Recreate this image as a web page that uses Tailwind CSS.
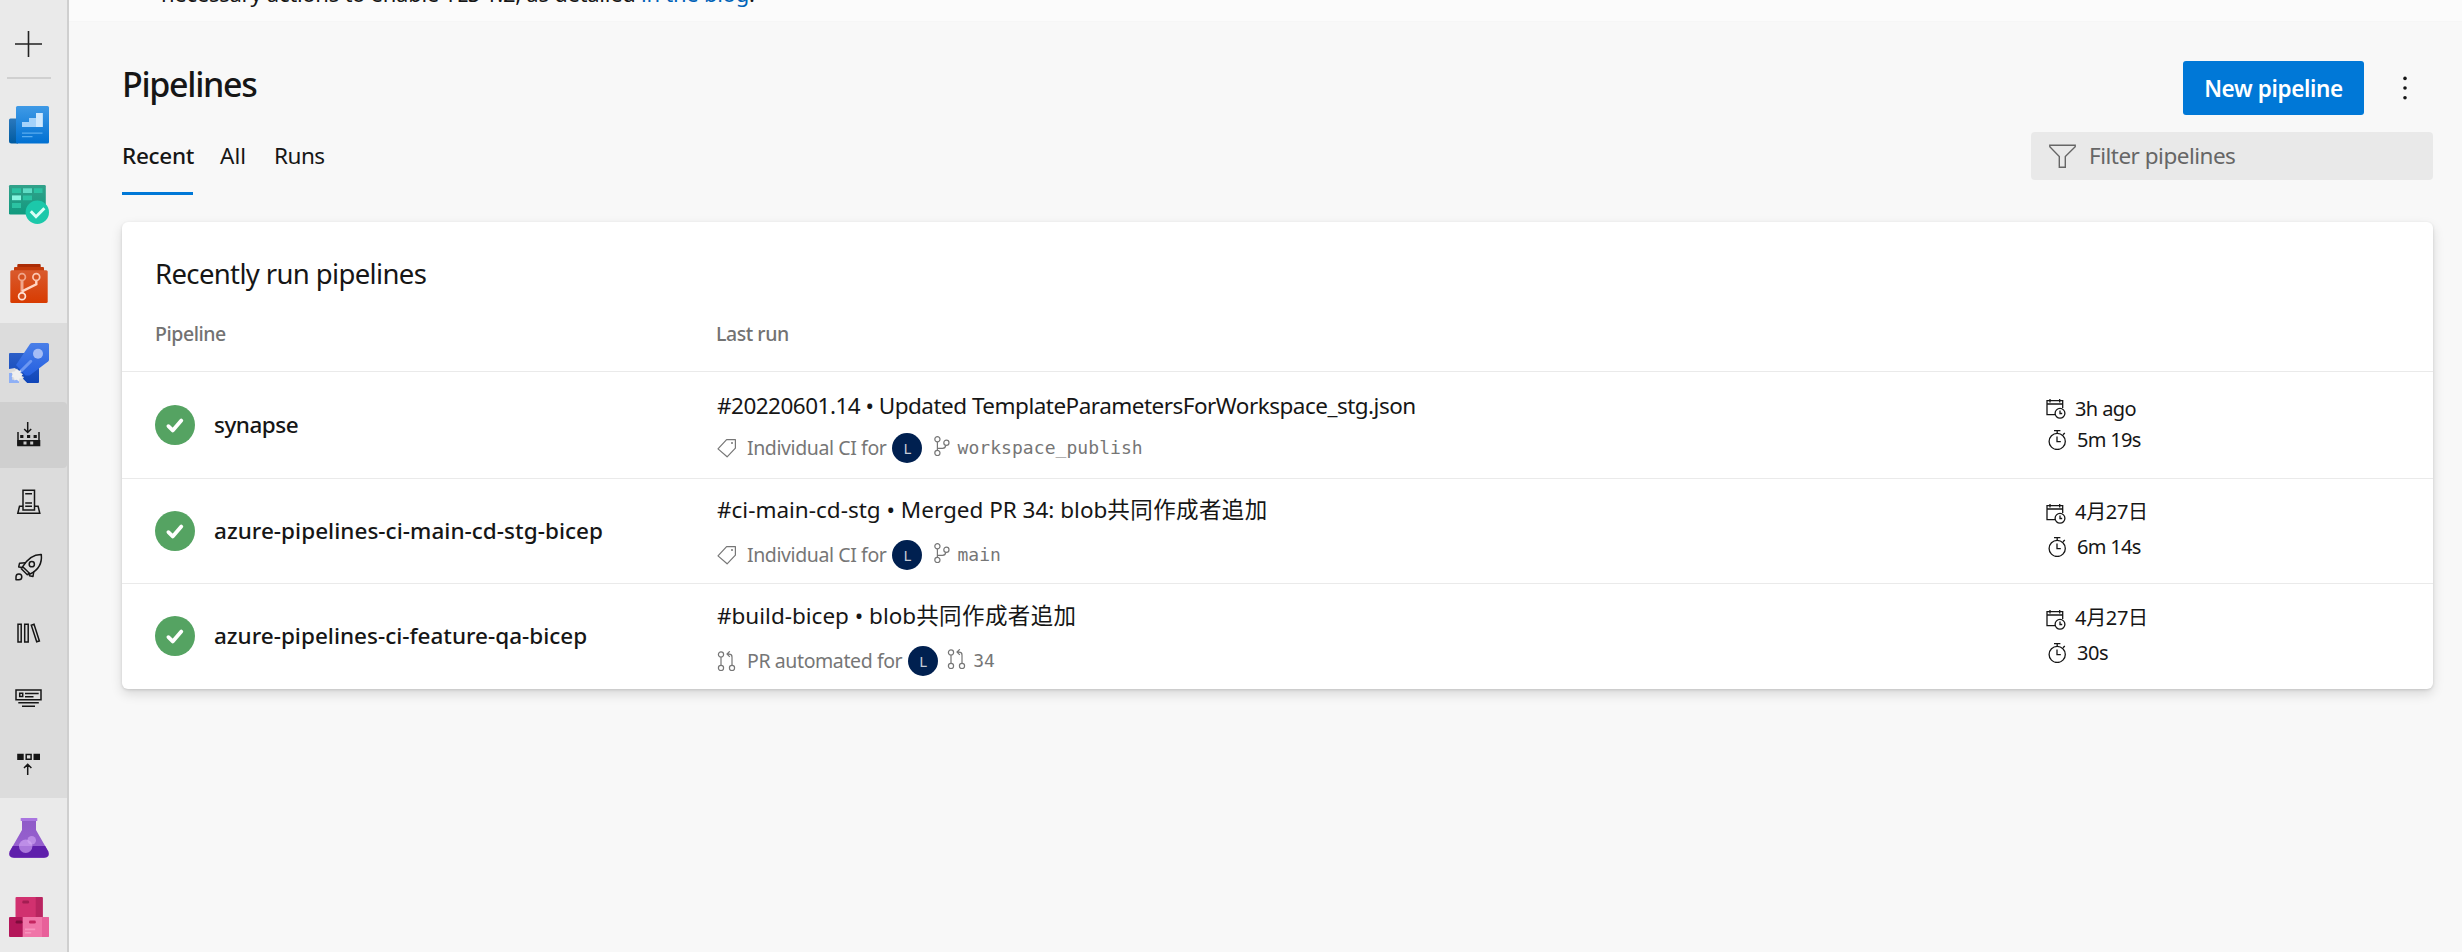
<!DOCTYPE html>
<html lang="en">
<head>
<meta charset="utf-8">
<title>Pipelines</title>
<script src="https://cdn.jsdelivr.net/npm/@tailwindcss/browser@4"></script>
</head>
<body class="flex h-[952px] w-[2462px] overflow-hidden bg-[#f8f8f8] font-['Noto_Sans','Noto_Sans_CJK_JP',sans-serif] text-[#161616]">

<!-- Icon symbols -->
<svg width="0" height="0" class="absolute">
  <defs>
    <linearGradient id="gBlue" x1="0" y1="0" x2="0" y2="1"><stop offset="0" stop-color="#3f9ae6"/><stop offset="1" stop-color="#0070d2"/></linearGradient>
    <linearGradient id="gBlueDk" x1="0" y1="0" x2="0" y2="1"><stop offset="0" stop-color="#2a78bd"/><stop offset="1" stop-color="#005ba1"/></linearGradient>
    <linearGradient id="gGreen" x1="0" y1="0" x2="0" y2="1"><stop offset="0" stop-color="#32a18a"/><stop offset="1" stop-color="#119a7f"/></linearGradient>
    <linearGradient id="gOrange" x1="0" y1="0" x2="0" y2="1"><stop offset="0" stop-color="#d95a2d"/><stop offset="1" stop-color="#d83b01"/></linearGradient>
    <linearGradient id="gRocket" x1="0" y1="0" x2="0" y2="1"><stop offset="0" stop-color="#4a7fe8"/><stop offset="1" stop-color="#2560e0"/></linearGradient>
    <linearGradient id="gRocketDk" x1="0" y1="0" x2="0" y2="1"><stop offset="0" stop-color="#2c5fc7"/><stop offset="1" stop-color="#0f45b8"/></linearGradient>
    <linearGradient id="gFlask" x1="0" y1="0" x2="0" y2="1"><stop offset="0" stop-color="#8f5bc8"/><stop offset="1" stop-color="#9a62d2"/></linearGradient>
    <symbol id="cal" viewBox="0 0 20 20"><g fill="none" stroke="#161616" stroke-width="1.3"><path d="M9 15.7H1V1.7h15.7V9M1 5h15.7M4 0v3.4M13.7 0v3.4"/><circle cx="14" cy="14.3" r="4.9"/><path d="M14 11.6v2.9h2.2"/></g></symbol>
    <symbol id="watch" viewBox="0 0 20 20"><g fill="none" stroke="#161616" stroke-width="1.3"><circle cx="9.2" cy="11.4" r="8.1"/><path d="M9.2 3.2V.7M6 .7h6.4M15 4.8l1.8-1.8M9 6.6v5.1h3.8"/></g></symbol>
    <symbol id="tag" viewBox="0 0 20 20"><path d="M9.6 1.6h8.8v8.6l-8.3 8.6L1 10.9z" fill="none" stroke="#767676" stroke-width="1.2" stroke-linejoin="round"/><circle cx="15" cy="5" r="1" fill="#767676"/></symbol>
    <symbol id="branch" viewBox="0 0 16 20"><g fill="none" stroke="#767676" stroke-width="1.2"><circle cx="3.4" cy="3.3" r="2.6"/><circle cx="3.4" cy="17" r="2.6"/><circle cx="12.4" cy="6.7" r="2.6"/><path d="M3.4 6v8.4M3.4 12.3h5.2c2 0 2.9-1 3.2-3"/></g></symbol>
    <symbol id="pr" viewBox="0 0 19 20"><g fill="none" stroke="#767676" stroke-width="1.2"><circle cx="4" cy="3.4" r="2.6"/><circle cx="4" cy="17" r="2.6"/><circle cx="15" cy="17" r="2.6"/><path d="M4 6v8.4M15 14.4V6c0-2-1-2.9-3-2.9H9.8M12.8.3L10 3.1l2.8 2.8"/></g></symbol>
    <symbol id="ok" viewBox="0 0 40 40"><circle cx="20" cy="20" r="20" fill="#55a362"/><path d="M13.4 21.2l4.3 4.2 8.6-9.800" fill="none" stroke="#fff" stroke-width="3.8" stroke-linecap="round" stroke-linejoin="round"/></symbol>
  </defs>
</svg>

<nav class="flex h-full w-[69px] shrink-0 flex-col border-r-2 border-[#cfcfcf] bg-[#eaeaea]">
  <div class="flex h-[86px] shrink-0 flex-col">
    <svg class="ml-[15px] mt-[30px] h-[28px] w-[28px]" viewBox="0 0 28 28"><path d="M0 14h27M13.5 1v26" stroke="#222" stroke-width="1.6"/></svg>
    <div class="ml-[7px] mt-[19px] h-[2px] w-[44px] bg-[#d0d0d0]"></div>
  </div>
  <div class="h-[79px] shrink-0 pl-[9px] pt-[19px]">
    <svg class="h-[40px] w-[40px] overflow-visible" viewBox="0 0 40 40"><path d="M0 15a1.5 1.5 0 0 1 1.5-1.5H9V38.5H2.5A2.5 2.5 0 0 1 0 36z" fill="url(#gBlueDk)"/><rect x="7" y="1" width="33" height="37.5" rx="1.5" fill="url(#gBlue)"/><path d="M13 22v-5h7v-4h7V8h6.700v14z" fill="#a4d2fa"/><path d="M27 8h6.700v14H27z" fill="#cfe8fd"/><path d="M13 28.2h20.500M13 31.600h10.500" stroke="#58acf0" stroke-width="1.3"/></svg>
  </div>
  <div class="h-[79px] shrink-0 pl-[9px] pt-[19px]">
    <svg class="h-[40px] w-[40px] overflow-visible" viewBox="0 0 40 40"><rect y="1" width="36.8" height="29.5" rx="1.3" fill="url(#gGreen)"/><g fill="#2bc2a2"><path d="M3 4.300h9V9H3zM25 4.300h8.500V9H25zM14 11.400h9v4.800h-9zM3 19h9v5H3z"/></g><path d="M14 4.300h9V9h-9z" fill="#5fdcc5"/><path d="M3 11.400h9v4.800H3z" fill="#86f5e0"/><circle cx="28.3" cy="28.3" r="11.7" fill="#1cc8aa"/><path d="M21.800 27.300l5.200 5.400 8.400-8.500" fill="none" stroke="#d9fff7" stroke-width="3"/></svg>
  </div>
  <div class="h-[79px] shrink-0 pl-[9px] pt-[19px]">
    <svg class="h-[40px] w-[40px] overflow-visible" viewBox="0 0 40 40"><path d="M8.300 4.300V2q0-1 1-1h21.400q1 0 1 1v2.300z" fill="#ab2c05"/><path d="M5 8V5q0-1 1-1h28q1 0 1 1v3z" fill="#c33a0a"/><rect x="1.3" y="7.3" width="37.4" height="32.7" rx="1.5" fill="url(#gOrange)"/><path d="M13 18v12" stroke="#f0a58a" stroke-width="3"/><path d="M27.300 17.500v3.800L13 28.300" fill="none" stroke="#ffd5c4" stroke-width="2.4"/><g fill="#d5501f" stroke="#fcc7b2" stroke-width="1.7"><circle cx="13" cy="14" r="3.4" stroke="#f0a58a"/><circle cx="27.3" cy="14" r="3.4"/><circle cx="13" cy="33.3" r="3.4" stroke="#ffe3d8"/></g></svg>
  </div>
  <div class="h-[79px] shrink-0 bg-[#dcdcdc] pl-[9px] pt-[20px]">
    <svg class="h-[40px] w-[40px] overflow-visible" viewBox="0 0 40 40"><path d="M0 11q0-1 1-1h19l10 14v15q0 1-1 1H18L6 27 0 26z" fill="url(#gRocketDk)"/><path d="M21 .9Q21.700 0 23 0h15.500Q40 0 40 1.500v15.200q0 1-.9 1.700L20.500 32.400h-4L7 22z" fill="url(#gRocket)"/><circle cx="29" cy="10.7" r="5" fill="#a5bdf6"/><path d="M21.800 18.300L12 28" stroke="#6c97f2" stroke-width="3" stroke-linecap="round"/><path d="M0 26l6-1 2.500 2.800 1.500-.8.3 3 3 .4-.6 2.600 2.300 1-1.400 2.200L18 40h-8l-7-3-3-7z" fill="#dcdcdc"/><path d="M0 30h3.200v6.800H10V40H0z" fill="#8fb0f5"/><path d="M8 25.500l1.500 2.500 2.500-.500-.500 2.800 2.500 1-2 2 1.500 2-3 .3-.5 3-2.500-2-2 1-.5-3-2.500-1 1.500-2-1.500-2.500 3-.5z" fill="#efefef"/></svg>
  </div>
  <div class="flex h-[396px] shrink-0 flex-col bg-[#dcdcdc]">
    <div class="h-[66px] rounded-r bg-[#cfcfcf] pl-[9px] pt-[13px]">
      <svg class="h-[40px] w-[40px]" viewBox="0 0 40 40"><path d="M18.700 7v10.500M15.200 14l3.500 3.500 3.500-3.500M9 17v13h21V17" fill="none" stroke="#161616" stroke-width="1.5"/><path fill="#161616" d="M11.200 20h3.200v3h-3.200zM18 20h3.200v3H18zM24.600 20h3.200v3h-3.200zM8.300 25h23v6.300h-23z"/><path fill="#c9c9c9" d="M14.500 26.600h3v3h-3zM21.200 26.600h3v3h-3z"/></svg>
    </div>
    <div class="h-[66px] pl-[9px] pt-[13px]">
      <svg class="h-[40px] w-[40px]" viewBox="0 0 40 40"><path d="M14 29V9.200h11.500V29zM16.200 12.700H23M16.200 22H23M16.200 25.200H23M13.500 25.300h-3l-1.700 6.900h22l-1.700-6.900h-3" fill="none" stroke="#161616" stroke-width="1.5"/></svg>
    </div>
    <div class="h-[66px] pl-[9px] pt-[13px]">
      <svg class="h-[40px] w-[40px]" viewBox="0 0 40 40"><g fill="none" stroke="#161616" stroke-width="1.5" stroke-linejoin="round"><path d="M32.300 7.500c-7.500-.2-13 3-18.600 12.200l7.500 7.300c8-4 12-11 11.100-19.500z"/><circle cx="22.8" cy="17.2" r="2.6"/><path d="M16.500 15.800l-6 .5-.8 3.600 4 .6M24.800 24.500l-.8 5-3.500-.8-.6-2.700M13.800 19.700l-1.500 2 6 6 2-1.500M7 32.800v-3.100a2.900 2.900 0 1 1 2.900 3.100z"/></g></svg>
    </div>
    <div class="h-[66px] pl-[9px] pt-[13px]">
      <svg class="h-[40px] w-[40px]" viewBox="0 0 40 40"><path d="M9 11.200h3.200v17.800H9zM15.700 11.200h3.500v17.800h-3.500zM22.300 12.200l2.700-.9 5.400 16.600-2.700.9z" fill="none" stroke="#161616" stroke-width="1.5"/></svg>
    </div>
    <div class="h-[66px] pl-[9px] pt-[13px]">
      <svg class="h-[40px] w-[40px]" viewBox="0 0 40 40"><path d="M7 11h25v9.700H7zM10.700 14.200h3v3.200h-3zM16 14.500h13.700M16 17.700h8.500M9.300 23.700h20.500M13 27.300h13" fill="none" stroke="#161616" stroke-width="1.5"/></svg>
    </div>
    <div class="h-[66px] pl-[9px] pt-[13px]">
      <svg class="h-[40px] w-[40px]" viewBox="0 0 40 40"><path fill="#161616" d="M8.200 8.700h6.500v6.200H8.200zM24.500 8.700H31v6.200h-6.500z"/><path d="M17.200 9.500h4.900v4.700h-4.900zM18.700 30V19.300M15 23l3.700-3.700 3.700 3.700" fill="none" stroke="#161616" stroke-width="1.5"/></svg>
    </div>
  </div>
  <div class="h-[79px] shrink-0 pl-[9px] pt-[19px]">
    <svg class="h-[40px] w-[40px] overflow-visible" viewBox="0 0 40 40"><path d="M13 3.500h14V13l12.300 21.500q2 6-4.300 6.200H5Q-1.300 40.500.7 34.500L13 13z" fill="url(#gFlask)"/><path d="M3.800 29h32.400l3.100 5.500q2 6-4.300 6.200H5Q-1.300 40.500.7 34.500z" fill="#5f1fab"/><rect x="11.7" y="1" width="16.6" height="3" rx=".6" fill="#a975e0"/><circle cx="16.7" cy="29.3" r="6.7" fill="#d3a8f5" fill-opacity=".65"/><circle cx="22.7" cy="23.3" r="4.3" fill="#d3a8f5" fill-opacity=".6"/></svg>
  </div>
  <div class="h-[75px] shrink-0 pl-[9px] pt-[19px]">
    <svg class="h-[40px] w-[40px] overflow-visible" viewBox="0 0 40 40"><rect x="6.5" y="1" width="27.2" height="20.5" rx="1" fill="#d1316f"/><path d="M26.700 1h6q1 0 1 1v19.500h-7z" fill="#b82560"/><rect y="21" width="14.5" height="20" rx="1" fill="#b4175a"/><path d="M13.700 21H39q1 0 1 1v18q0 1-1 1H13.700z" fill="#f075a8"/><path d="M33 21h6q1 0 1 1v18q0 1-1 1h-6z" fill="#e8609a"/><rect x="13.3" y="4.6" width="6.8" height="3" rx="1.3" fill="#a31e52"/><rect x="6.6" y="24.6" width="6.8" height="3" rx="1.3" fill="#7d0c3b"/><rect x="20" y="24.6" width="6.8" height="3" rx="1.3" fill="#c42560"/><path d="M16 33.400h10.200M16 36.700h6.200" stroke="#f893bd" stroke-width="1.6"/></svg>
  </div>
</nav>

<main class="flex min-w-0 flex-1 flex-col">
  <div class="h-[22px] shrink-0 overflow-hidden border-b border-[#f6f6f6] bg-[#fbfbfb] pl-[92px]">
    <p class="-mt-[22px] text-[22px] leading-[30px] tracking-[-0.26px] whitespace-pre">necessary actions to enable TLS 1.2, as detailed <span class="text-[#0063b8]">in the blog</span>.</p>
  </div>

  <div class="flex flex-col pl-[53px] pr-[29px]">
    <header class="flex h-[93px] items-start pt-[39px]">
      <h1 class="-mt-[1px] text-[34px] leading-[48px] font-medium tracking-[-1.3px]">Pipelines</h1>
      <div class="ml-auto flex items-center">
        <button class="flex h-[54px] w-[181px] items-center justify-center rounded-[3px] bg-[#0078d7] pt-[2px] text-[22.5px] font-semibold tracking-[-0.36px] text-white">New pipeline</button>
        <svg class="mr-[23px] ml-[36px] h-[24px] w-[10px]" viewBox="0 0 10 24"><g fill="#161616"><circle cx="5" cy="2.4" r="1.8"/><circle cx="5" cy="12" r="1.8"/><circle cx="5" cy="21.7" r="1.8"/></g></svg>
      </div>
    </header>

    <div class="flex h-[107px] items-start pt-[17px]">
      <div class="flex pt-[9px] text-[22.5px] leading-[30px]">
        <span class="mr-[27px] h-[54px] w-[71px] border-b-[3px] border-[#0078d7] font-medium tracking-[-0.3px] whitespace-nowrap">Recent</span>
        <span class="mr-[28px]">All</span>
        <span class="tracking-[-0.5px]">Runs</span>
      </div>
      <div class="ml-auto flex h-[48px] w-[402px] items-center rounded-[4px] bg-[#e9e9e9] pl-[18px] text-[22.5px] tracking-[-0.5px] text-[#666]">
        <svg class="mr-[13px] h-[24px] w-[27px]" viewBox="0 0 27 24"><path d="M.8 1.200h25.400v1.600L16.300 12.600v10.600h-6V12.600L.8 2.800z" fill="none" stroke="#666" stroke-width="1.4"/></svg>
        <span>Filter pipelines</span>
      </div>
    </div>

    <section class="flex h-[467px] flex-col rounded-[6px] bg-white shadow-[0_5px_12px_rgba(0,0,0,0.13),0_1px_3px_rgba(0,0,0,0.12)]">
      <div class="h-[150px] border-b border-[#eaeaea] pt-[34px] pl-[33px]">
        <h2 class="text-[27.5px] leading-[36px] tracking-[-0.64px]">Recently run pipelines</h2>
        <div class="mt-[29px] flex text-[19.5px] leading-[26px] font-medium tracking-[-0.45px] text-[#727272]">
          <div class="w-[561px]">Pipeline</div>
          <div>Last run</div>
        </div>
      </div>

      <div class="flex h-[107px] border-b border-[#eaeaea] pl-[33px]">
        <div class="flex w-[562px] pt-[33px] text-[22.5px] leading-[40px] font-medium tracking-[-0.5px]">
          <svg class="mr-[19px] h-[40px] w-[40px]"><use href="#ok"/></svg><span>synapse</span>
        </div>
        <div class="w-[1329px] pt-[19px]">
          <p class="text-[22.5px] leading-[30px] tracking-[-0.51px]">#20220601.14 • Updated TemplateParametersForWorkspace_stg.json</p>
          <div class="mt-[12px] flex h-[30px] items-center text-[19.5px] leading-[30px] text-[#767676]">
            <svg class="mr-[10px] h-[20px] w-[20px]"><use href="#tag"/></svg>
            <span class="tracking-[-0.4px]">Individual CI for</span>
            <span class="ml-[6px] flex h-[30px] w-[30px] items-center justify-center rounded-full bg-[#002050] text-[15px] text-[#c5cbd6]">L</span>
            <svg class="-mt-[4px] mr-[7px] ml-[12px] h-[20px] w-[16px]"><use href="#branch"/></svg>
            <span class="font-['DejaVu_Sans_Mono',monospace] text-[18px] tracking-[0.06px]">workspace_publish</span>
          </div>
        </div>
        <div class="pt-[24px] text-[20px] leading-[26px]">
          <div class="flex items-center"><svg class="mr-[9px] h-[20px] w-[20px]"><use href="#cal"/></svg><span class="tracking-[-0.6px]">3h ago</span></div>
          <div class="mt-[5px] flex items-center pl-[2px]"><svg class="mr-[9px] h-[20px] w-[20px]"><use href="#watch"/></svg><span class="tracking-[-0.7px]">5m 19s</span></div>
        </div>
      </div>

      <div class="flex h-[105px] border-b border-[#eaeaea] pl-[33px]">
        <div class="flex w-[562px] pt-[32px] text-[22.5px] leading-[40px] font-medium tracking-[0.03px]">
          <svg class="mr-[19px] h-[40px] w-[40px]"><use href="#ok"/></svg><span>azure-pipelines-ci-main-cd-stg-bicep</span>
        </div>
        <div class="w-[1329px] pt-[16px]">
          <p class="text-[22.5px] leading-[30px]">#ci-main-cd-stg • Merged PR 34: blob<span class="tracking-[0.4px]">共同作成者追加</span></p>
          <div class="mt-[15px] flex h-[30px] items-center text-[19.5px] leading-[30px] text-[#767676]">
            <svg class="mr-[10px] h-[20px] w-[20px]"><use href="#tag"/></svg>
            <span class="tracking-[-0.4px]">Individual CI for</span>
            <span class="ml-[6px] flex h-[30px] w-[30px] items-center justify-center rounded-full bg-[#002050] text-[15px] text-[#c5cbd6]">L</span>
            <svg class="-mt-[4px] mr-[7px] ml-[12px] h-[20px] w-[16px]"><use href="#branch"/></svg>
            <span class="font-['DejaVu_Sans_Mono',monospace] text-[18px]">main</span>
          </div>
        </div>
        <div class="pt-[20px] text-[20px] leading-[26px]">
          <div class="flex items-center"><svg class="mt-[3px] mr-[9px] h-[20px] w-[20px]"><use href="#cal"/></svg><span class="tracking-[-0.3px]">4月27日</span></div>
          <div class="mt-[9px] flex items-center pl-[2px]"><svg class="mr-[9px] h-[20px] w-[20px]"><use href="#watch"/></svg><span class="tracking-[-0.7px]">6m 14s</span></div>
        </div>
      </div>

      <div class="flex h-[105px] pl-[33px]">
        <div class="flex w-[562px] pt-[32px] text-[22.5px] leading-[40px] font-medium">
          <svg class="mr-[19px] h-[40px] w-[40px]"><use href="#ok"/></svg><span>azure-pipelines-ci-feature-qa-bicep</span>
        </div>
        <div class="w-[1329px] pt-[17px]">
          <p class="text-[22.5px] leading-[30px]">#build-bicep • blob<span class="tracking-[0.4px]">共同作成者追加</span></p>
          <div class="mt-[15px] flex h-[30px] items-center text-[19.5px] leading-[30px] text-[#767676]">
            <svg class="mr-[11px] h-[20px] w-[19px]"><use href="#pr"/></svg>
            <span class="tracking-[-0.4px]">PR automated for</span>
            <span class="ml-[6px] flex h-[30px] w-[30px] items-center justify-center rounded-full bg-[#002050] text-[15px] text-[#c5cbd6]">L</span>
            <svg class="-mt-[4px] mr-[7px] ml-[9px] h-[20px] w-[19px]"><use href="#pr"/></svg>
            <span class="font-['DejaVu_Sans_Mono',monospace] text-[18px]">34</span>
          </div>
        </div>
        <div class="pt-[21px] text-[20px] leading-[26px]">
          <div class="flex items-center"><svg class="mt-[3px] mr-[9px] h-[20px] w-[20px]"><use href="#cal"/></svg><span class="tracking-[-0.3px]">4月27日</span></div>
          <div class="mt-[9px] flex items-center pl-[2px]"><svg class="mr-[9px] h-[20px] w-[20px]"><use href="#watch"/></svg><span class="tracking-[-0.4px]">30s</span></div>
        </div>
      </div>
    </section>
  </div>
</main>
</body>
</html>
